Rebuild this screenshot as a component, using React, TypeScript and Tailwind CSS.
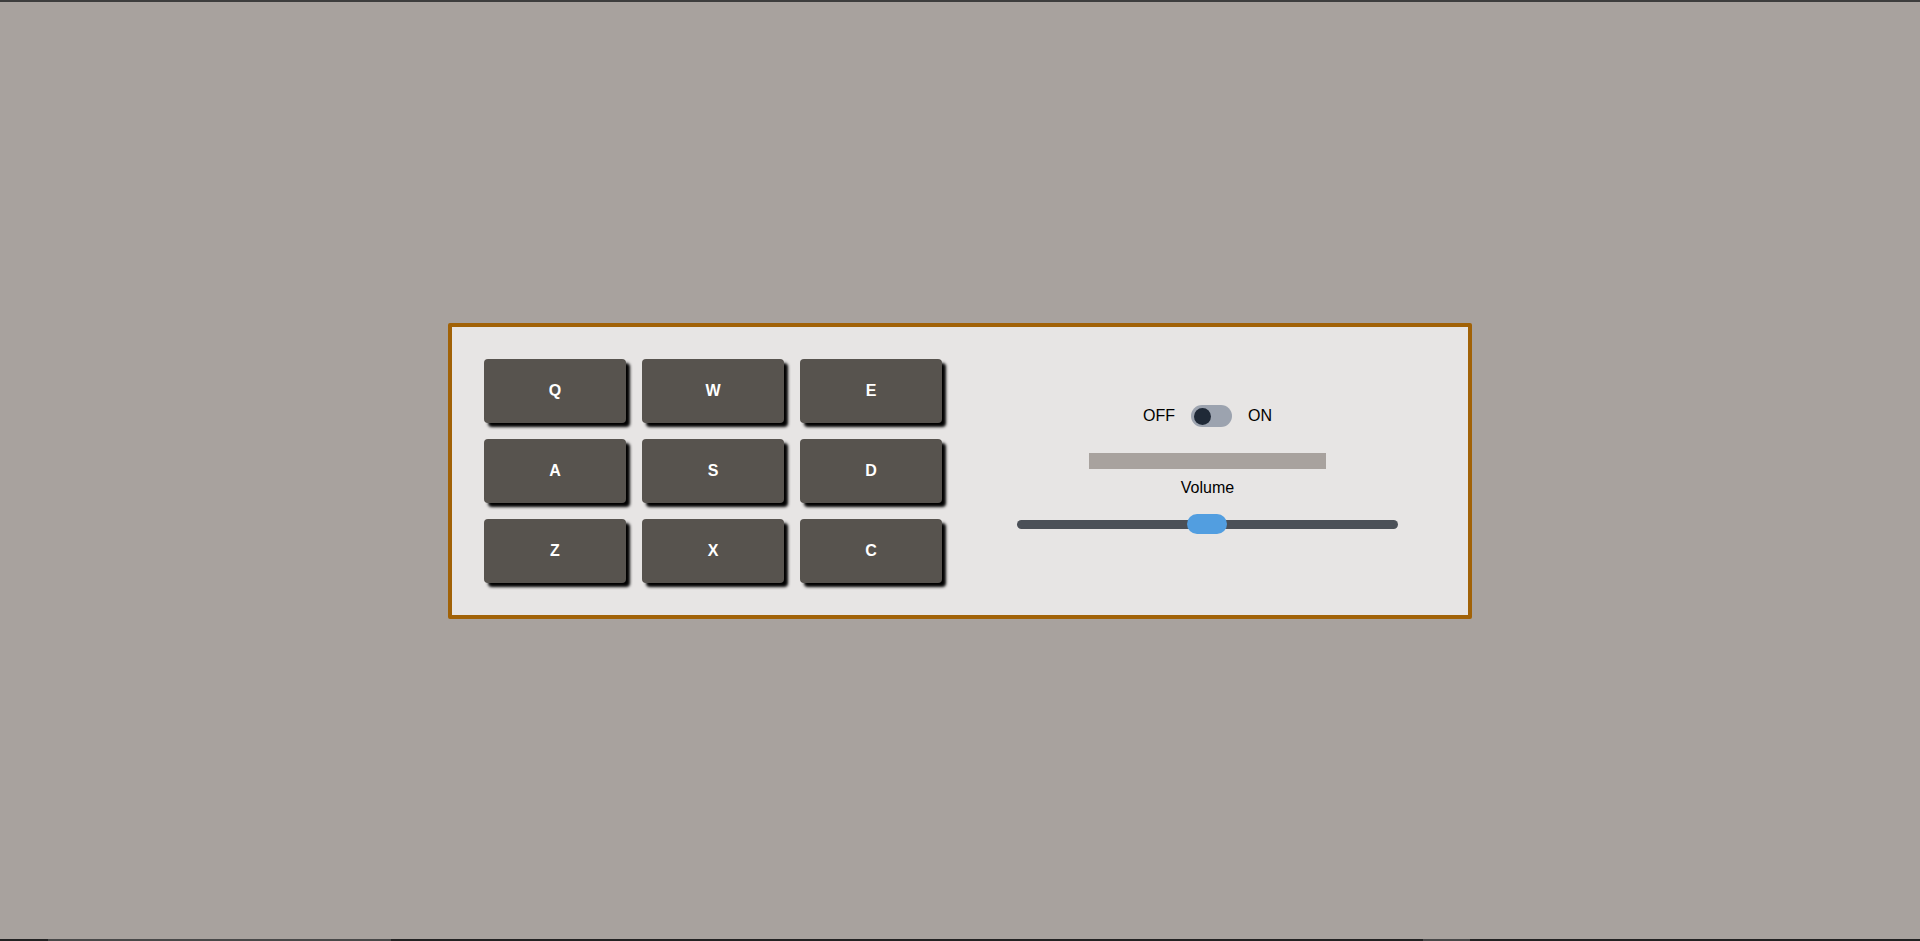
import React from "react";

const keys = ["Q", "W", "E", "A", "S", "D", "Z", "X", "C"];

export default function App() {
  return (
    <div
      className="w-[1920px] h-[941px] flex flex-col bg-[#a8a29e]"
      style={{ fontFamily: '"Liberation Sans", Arial, sans-serif' }}
    >
      <div className="h-[2px] bg-[#3d3d3d]" />
      <div className="flex-1 flex items-center justify-center">
        <div className="w-[1024px] h-[296px] border-4 border-[#a16207] rounded-[2px] bg-[#e7e5e4] flex items-center pl-[32px]">
          <div className="grid grid-cols-3 gap-4">
            {keys.map((k) => (
              <div
                key={k}
                className="w-[142px] h-[64px] rounded-[4px] bg-[#57534e] text-white font-bold text-[16px] flex items-center justify-center shadow-[4px_4px_3px_#000]"
              >
                {k}
              </div>
            ))}
          </div>
          <div className="ml-[75px] w-[381px] flex flex-col items-center mb-[6px] pt-[3px]">
            <div className="flex items-center gap-4 text-[16px] text-black">
              <span>OFF</span>
              <div className="w-[41px] h-[22px] rounded-full bg-[#9ca3af] flex items-center pl-[3px]">
                <div className="w-[17px] h-[17px] rounded-full bg-[#1f2937]" />
              </div>
              <span>ON</span>
            </div>
            <div className="mt-[25px] w-[237px] h-[16px] bg-[#a8a29e]" />
            <div className="mt-[7px] text-[16px] leading-[24px] text-black">Volume</div>
            <div className="mt-[14px] w-[381px] h-[20px] relative flex items-center">
              <div className="w-full h-[9px] rounded-full bg-[#4b5057]" />
              <div className="absolute left-[170px] top-0 w-[40px] h-[20px] rounded-full bg-[#529ee0]" />
            </div>
          </div>
        </div>
      </div>
      <div className="h-[2px] bg-[#222] flex">
        <div className="w-[48px]" />
        <div className="w-[343px] bg-[#484848]" />
        <div className="flex-1" />
        <div className="w-[47px] bg-[#484848]" />
        <div className="w-[450px]" />
      </div>
    </div>
  );
}
